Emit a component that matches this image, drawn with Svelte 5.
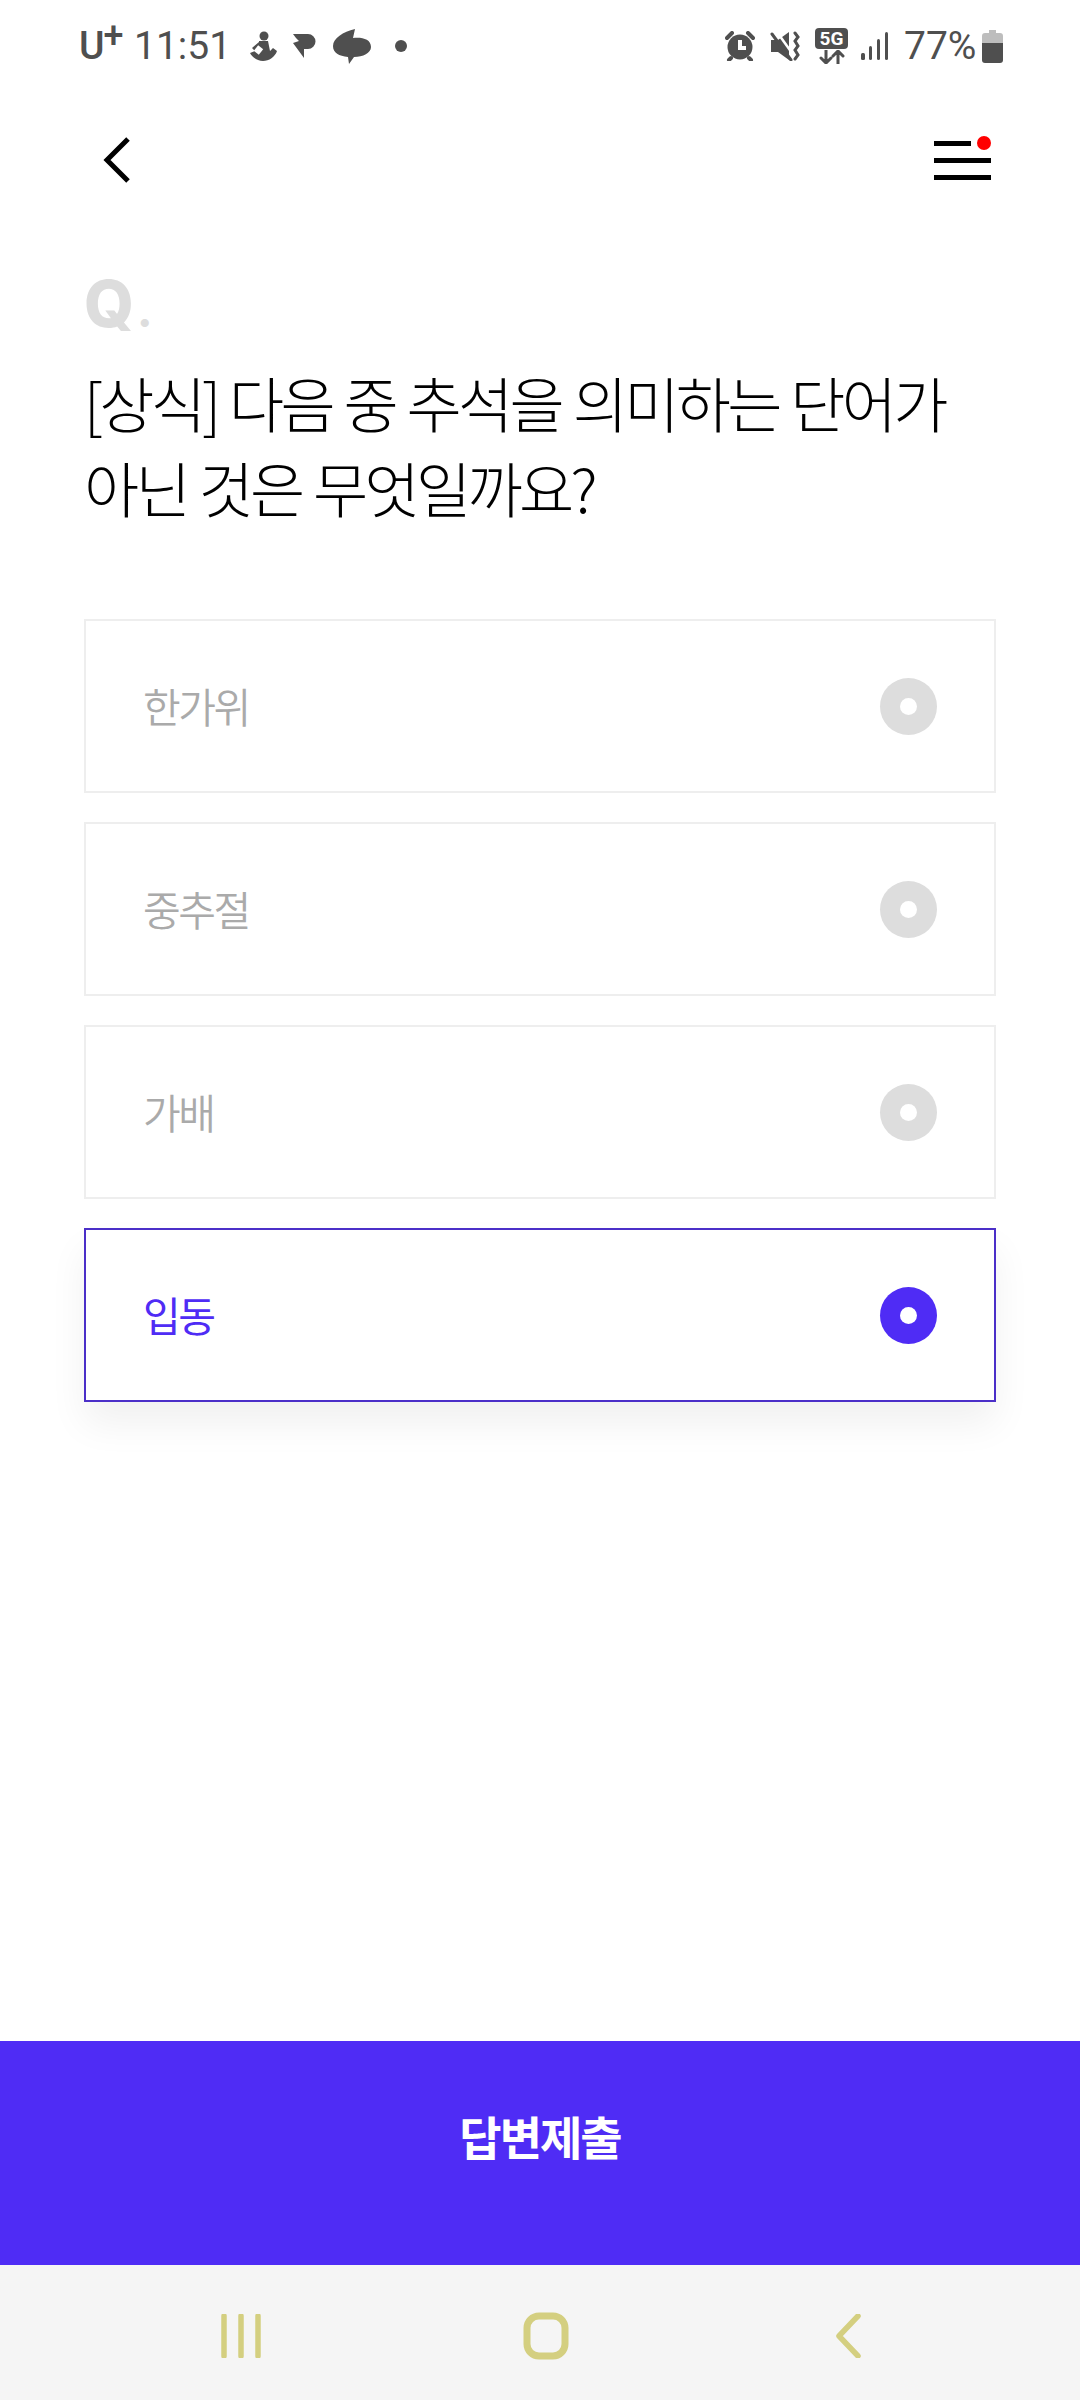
<script lang="ts">
  const options = [
    { label: '한가위', selected: false },
    { label: '중추절', selected: false },
    { label: '가배', selected: false },
    { label: '입동', selected: true }
  ]
</script>

<div class="page">
  <div class="status">
    <div class="side">
      <span class="carrier">U<sup>+</sup></span>
      <span class="time">11:51</span>
      <svg class="noti" width="27" height="30" viewBox="0 0 27 30">
        <circle cx="14" cy="5" r="4.500" />
        <path d="M9 10h9l2 10 3-3 4 3c-2 6-8 10-14 10S2 26 0 22l5-2-3-3 7-6z" />
        <path d="M6 17l5 4" class="cut thin" />
      </svg>
      <svg class="noti flag" width="24" height="26" viewBox="0 0 24 26">
        <path d="M1 1h15a7.500 7.500 0 0 1 0 15h-4v9L1 10l6-2-3-3z" />
      </svg>
      <svg class="noti blob" width="38" height="35" viewBox="0 0 38 35">
        <path d="M22 0l-2 9c9-1 18 1 18 9 0 6-8 10-17 10l-5 7-1-7C6 27 0 24 0 17 0 9 10 3 22 0z" />
      </svg>
      <span class="dot"></span>
    </div>
    <div class="side right">
      <svg class="noti" width="30" height="30" viewBox="0 0 30 30">
        <circle cx="15" cy="16" r="12.500" />
        <path d="M15 9v8h6" class="cut" />
        <path d="M2 7l5-5M28 7l-5-5M6 27l-2 2M24 27l2 2" class="line" />
      </svg>
      <svg class="noti" width="30" height="30" viewBox="0 0 30 30">
        <path d="M1 9h7l11-8v28l-11-8H1z" />
        <path d="M7 1l15 21" class="cut slim" />
        <path d="M2 3l19 26" class="line thin" />
        <path d="M25 2l3 4-3 4 3 5-3 4 3 5-3 4" class="line thin" />
      </svg>
      <div class="fiveg">
        <span class="fiveg-label">5G</span>
        <svg width="26" height="14" viewBox="0 0 26 14">
          <path d="M7 0v12M2 8l5 5 5-5M19 14V2M14 6l5-5 5 5" class="line thin" />
        </svg>
      </div>
      <svg class="noti" width="28" height="30" viewBox="0 0 28 30">
        <rect x="0" y="22" width="4" height="7" rx="1.500" />
        <rect x="8" y="15" width="3" height="14" rx="1.500" />
        <rect x="16" y="8" width="3" height="21" rx="1.500" />
        <rect x="24" y="1" width="3" height="28" rx="1.500" />
      </svg>
      <span class="percent">77%</span>
      <svg class="noti battery" width="21" height="33" viewBox="0 0 21 33">
        <path class="empty" d="M7 0h7v3h4a3 3 0 0 1 3 3v7H0V6a3 3 0 0 1 3-3h4z" />
        <path d="M0 13h21v17a3 3 0 0 1-3 3H3a3 3 0 0 1-3-3z" />
      </svg>
    </div>
  </div>

  <header class="topbar">
    <svg width="28" height="46" viewBox="0 0 28 46">
      <path d="M25 2L4 23l21 21" />
    </svg>
    <div class="menu">
      <span class="bar short"></span>
      <span class="bar"></span>
      <span class="bar"></span>
      <span class="badge"></span>
    </div>
  </header>

  <main class="content">
    <div class="q">Q<span>.</span></div>
    <h1>[상식] 다음 중 추석을 의미하는 단어가<br />아닌 것은 무엇일까요?</h1>

    <div class="options">
      {#each options as opt}
        <div class="option" class:selected={opt.selected}>
          <span>{opt.label}</span>
          <span class="radio"></span>
        </div>
      {/each}
    </div>
  </main>

  <button class="submit">답변제출</button>

  <nav class="navbar">
    <svg width="40" height="44" viewBox="0 0 40 44">
      <path d="M3 2v40M20 2v40M37 2v40" />
    </svg>
    <svg class="home" width="46" height="48" viewBox="0 0 46 48">
      <rect x="4" y="4" width="38" height="40" rx="12" />
    </svg>
    <svg width="26" height="44" viewBox="0 0 26 44">
      <path d="M23 2L4 22l19 20" />
    </svg>
  </nav>
</div>

<style>
  :global(body) {
    margin: 0;
    background: #fff;
  }

  .page {
    width: 1080px;
    height: 2400px;
    display: flex;
    flex-direction: column;
    font-family: "Noto Sans CJK KR", sans-serif;
    color: #000;
  }

  .status {
    height: 92px;
    padding: 0 77px 0 79px;
    display: flex;
    justify-content: space-between;
    align-items: center;
    font-family: Roboto, sans-serif;
    color: #4f4f4f;
  }

  .side {
    display: flex;
    align-items: center;
  }

  .carrier {
    font-size: 39px;
    font-weight: 500;
    line-height: 1;
    width: 55px;
  }

  .carrier sup {
    font-size: 36px;
    line-height: 0;
    vertical-align: 11px;
    margin-left: -1px;
  }

  .time {
    font-size: 39px;
    line-height: 1;
    width: 116px;
  }

  .noti {
    fill: #4f4f4f;
    margin-right: 15px;
  }

  .flag {
    margin-right: 17px;
  }

  .blob {
    margin-right: 24px;
  }

  .dot {
    width: 12px;
    height: 12px;
    border-radius: 50%;
    background: #4f4f4f;
  }

  .line {
    fill: none;
    stroke: #4f4f4f;
    stroke-width: 4;
    stroke-linecap: round;
  }

  .cut {
    fill: none;
    stroke: #fff;
    stroke-width: 4;
  }

  .line.thin {
    stroke-width: 3;
  }

  .cut.thin {
    stroke-width: 7;
  }

  .cut.slim {
    stroke-width: 2.500;
  }

  .fiveg {
    display: flex;
    flex-direction: column;
    align-items: center;
    margin-right: 13px;
    gap: 1px;
  }

  .fiveg-label {
    width: 33px;
    height: 21px;
    border-radius: 4px;
    background: #4f4f4f;
    color: #fff;
    font-size: 19px;
    font-weight: 700;
    line-height: 21px;
    text-align: center;
  }

  .percent {
    font-size: 39px;
    line-height: 1;
    width: 78px;
  }

  .battery {
    margin-right: 0;
  }

  .empty {
    fill: #bdbdbd;
  }

  .topbar {
    height: 136px;
    padding: 0 89px 0 103px;
    display: flex;
    justify-content: space-between;
    align-items: center;
  }

  .topbar svg path {
    fill: none;
    stroke: #000;
    stroke-width: 5;
  }

  .menu {
    position: relative;
    width: 57px;
    display: flex;
    flex-direction: column;
    gap: 12px;
  }

  .bar {
    height: 5px;
    background: #000;
  }

  .bar.short {
    width: 37px;
  }

  .badge {
    position: absolute;
    top: -5px;
    right: 0;
    width: 14px;
    height: 14px;
    border-radius: 50%;
    background: #f00;
  }

  .content {
    flex: 1;
    padding: 46px 84px 0;
  }

  .q {
    font-family: Inter, sans-serif;
    font-size: 64px;
    font-weight: 800;
    line-height: 60px;
    color: #ddd;
  }

  .q span {
    font-size: 44px;
    font-weight: 800;
    margin-left: 3px;
  }

  h1 {
    margin: 18px 0 0;
    font-size: 60px;
    font-weight: 300;
    line-height: 85px;
    letter-spacing: -3.700px;
    word-spacing: 2px;
    white-space: nowrap;
  }

  .options {
    margin-top: 90px;
    display: flex;
    flex-direction: column;
    gap: 29px;
  }

  .option {
    height: 174px;
    box-sizing: border-box;
    border: 2px solid #eee;
    padding: 0 57px;
    display: flex;
    justify-content: space-between;
    align-items: center;
    font-size: 41px;
    font-weight: 350;
    letter-spacing: -2.500px;
    color: #aaa;
  }

  .option > span:first-child {
    padding-bottom: 3px;
  }

  .radio {
    width: 57px;
    height: 57px;
    border-radius: 50%;
    background: #ddd;
    display: flex;
    align-items: center;
    justify-content: center;
  }

  .radio::after {
    content: '';
    width: 17px;
    height: 17px;
    border-radius: 50%;
    background: #fff;
  }

  .option.selected {
    border-color: #4b2fc8;
    color: #4f2cf5;
    font-weight: 400;
    box-shadow: 0 22px 36px rgba(0, 0, 0, 0.06);
  }

  .selected .radio {
    background: #4f2cf5;
  }

  .submit {
    height: 224px;
    border: 0;
    padding: 0 0 36px;
    background: #4f2cf5;
    color: #fff;
    font-family: inherit;
    font-size: 46px;
    font-weight: 700;
    letter-spacing: -2px;
  }

  .navbar {
    height: 135px;
    background: #f5f5f5;
    display: flex;
    align-items: center;
    padding: 6px 219px 0 221px;
    box-sizing: border-box;
    justify-content: space-between;
  }

  .navbar svg {
    fill: none;
    stroke: #d4cf80;
    stroke-width: 5.500;
    stroke-linecap: round;
    stroke-linejoin: round;
  }

  .navbar .home {
    stroke-width: 7;
    margin-right: 5px;
  }
</style>
